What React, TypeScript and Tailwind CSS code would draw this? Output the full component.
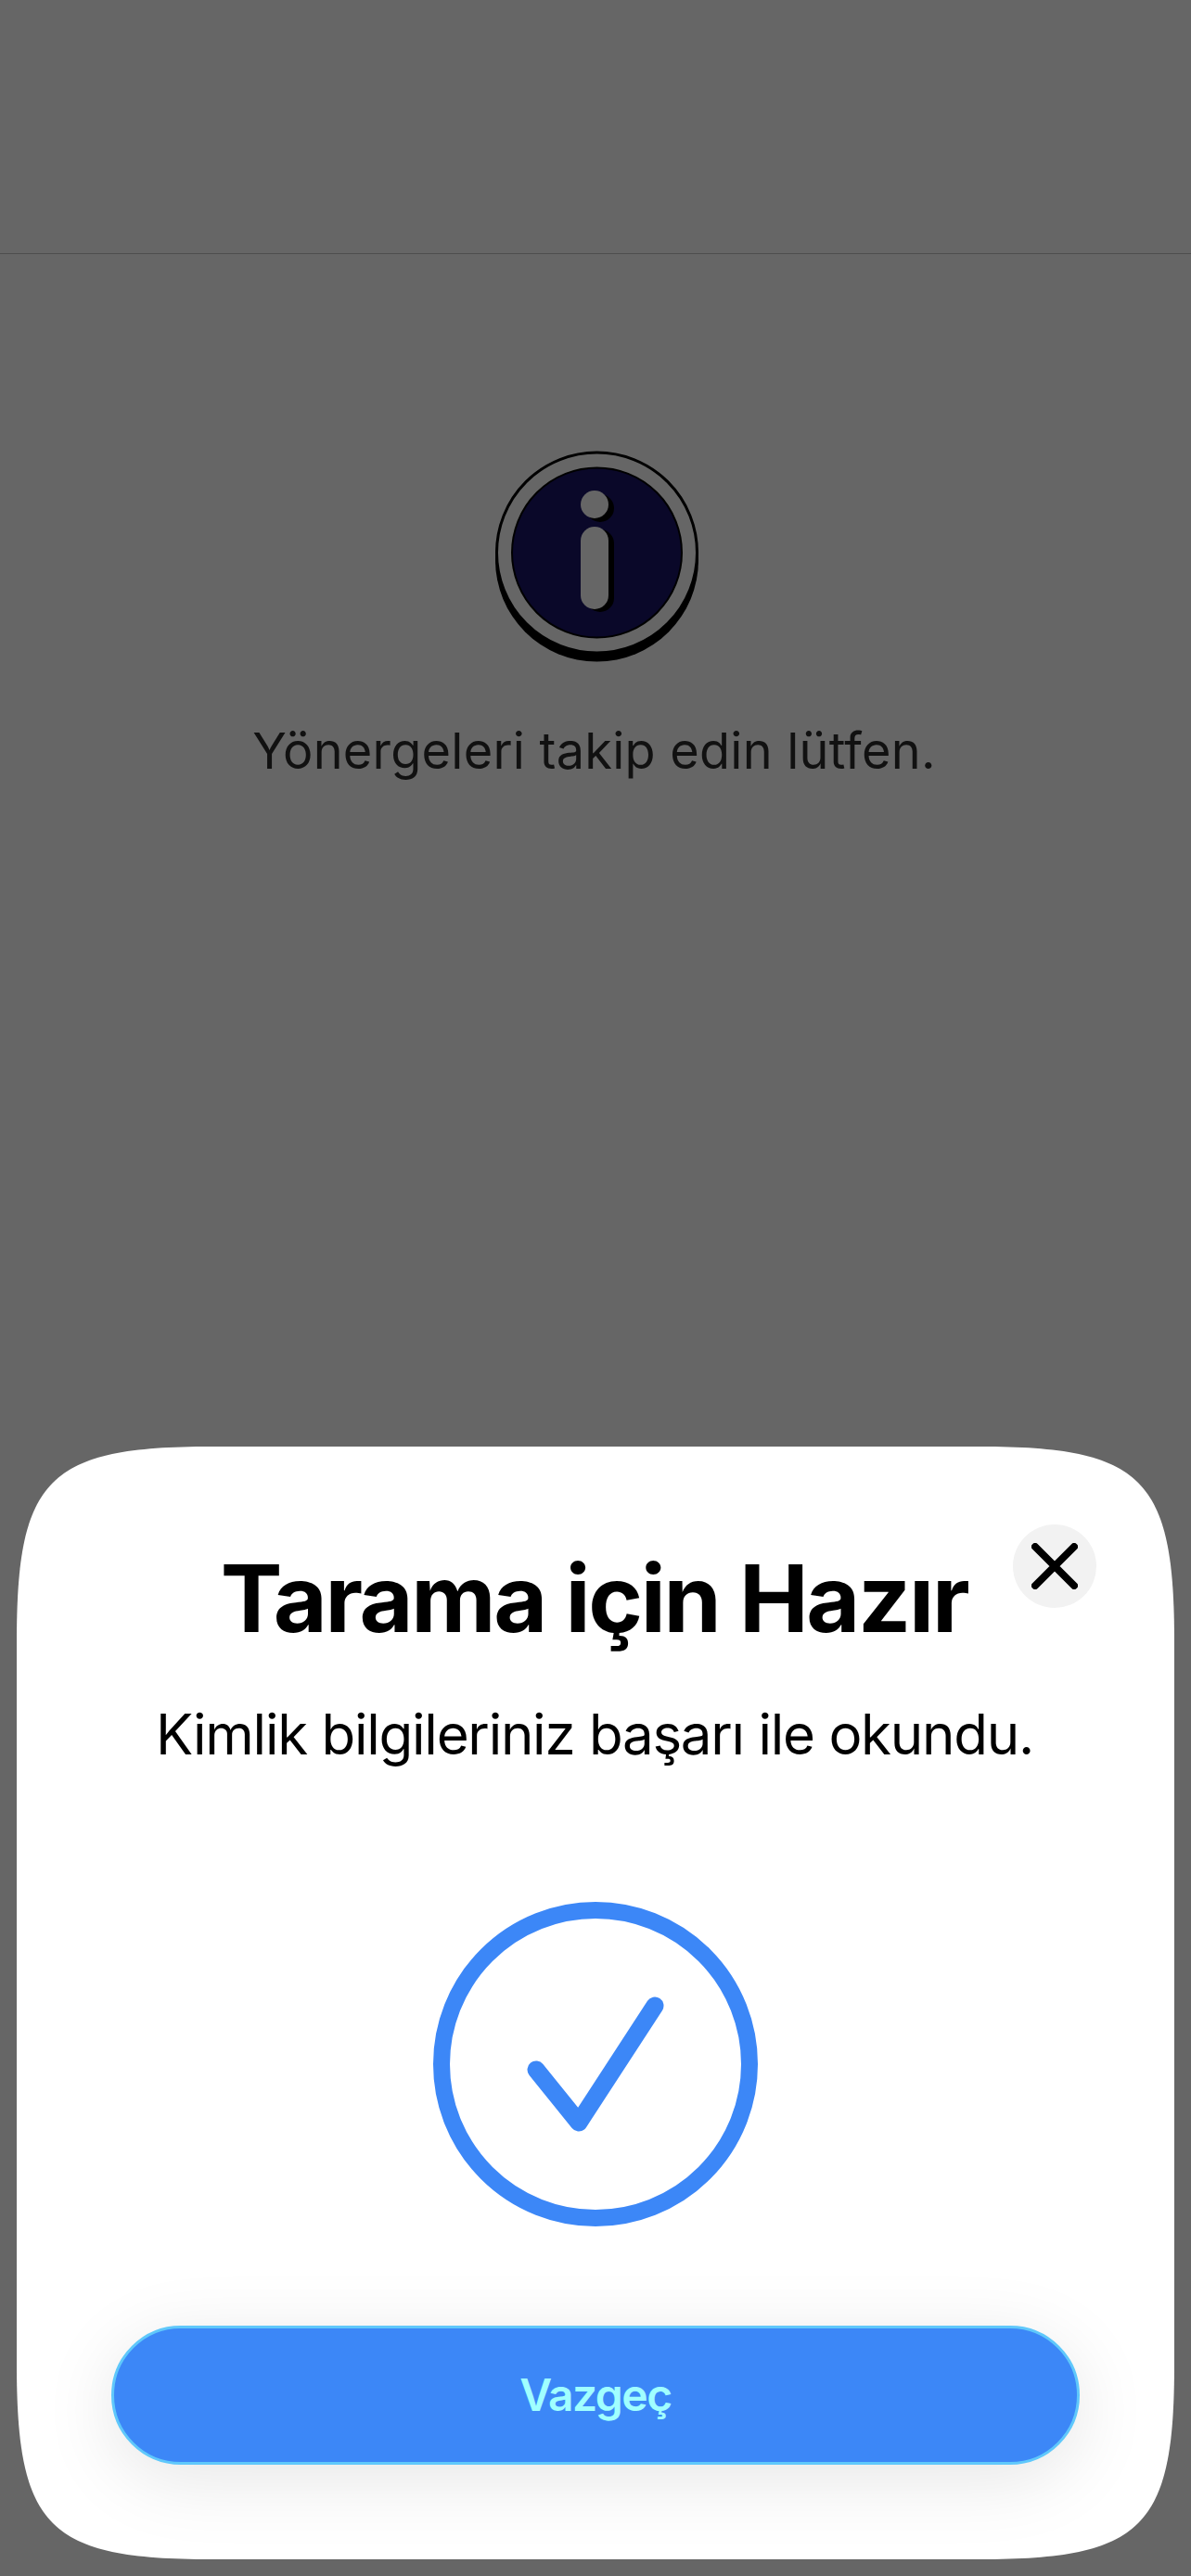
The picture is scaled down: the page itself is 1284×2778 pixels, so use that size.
export default function App() {
  return (
    <div className="relative w-[1284px] h-[2778px] bg-[#666666] overflow-hidden font-['Inter',sans-serif] flex flex-col items-center">
      <div className="w-full h-[274px] shrink-0 border-b border-b-[#4d4d4d]" />
      <svg className="mt-[211px] ml-[4px] shrink-0" width="224" height="232" viewBox="0 0 224 232">
        <circle cx="111.5" cy="119" r="109.5" fill="#000" />
        <circle cx="111.5" cy="111" r="108" fill="#666" stroke="#000" strokeWidth="3" />
        <circle cx="111.5" cy="111" r="91.5" fill="#0a0829" stroke="#000" strokeWidth="2" />
        <circle cx="115" cy="63" r="15" fill="#000" />
        <rect x="100" y="86" width="30" height="89" rx="15" fill="#000" />
        <circle cx="109" cy="59" r="15" fill="#666" />
        <rect x="94" y="83" width="30" height="89" rx="15" fill="#666" />
      </svg>
      <p className="mt-[59px] text-[54px] leading-[68px] text-[#111111] tracking-[0.25px] whitespace-nowrap ml-[-3px]">Yönergeleri takip edin lütfen.</p>
      <div className="absolute left-[18px] top-[1560px] w-[1248px] h-[1200px] bg-white [clip-path:path('M0_210C0_34_34_0_210_0L1038_0C1214_0_1248_34_1248_210L1248_990C1248_1166_1214_1200_1038_1200L210_1200C34_1200_0_1166_0_990Z')] flex flex-col items-center">
        <button className="absolute left-[1074px] top-[84px] w-[90px] h-[90px] rounded-full bg-[#f2f2f2] flex items-center justify-center">
          <svg width="50" height="50" viewBox="0 0 50 50" fill="none" stroke="#000" strokeWidth="8" strokeLinecap="round">
            <path d="M4 4 L46 46 M46 4 L4 46" />
          </svg>
        </button>
        <h1 className="mt-[104px] ml-[-3px] text-[100px] leading-[120px] font-bold tracking-[-2.3px] text-black whitespace-nowrap">Tarama için Hazır</h1>
        <p className="mt-[50px] ml-[-2px] text-[60px] leading-[72px] tracking-[-1.25px] text-black whitespace-nowrap">Kimlik bilgileriniz başarı ile okundu.</p>
        <svg className="mt-[145px] shrink-0" width="350" height="350" viewBox="0 0 350 350" fill="none" stroke="#3c87f7">
          <circle cx="175" cy="175" r="166" strokeWidth="18" />
          <path d="M111 181 L157 238 L239 112" strokeWidth="19" strokeLinecap="round" strokeLinejoin="round" />
        </svg>
        <button className="mt-[107px] w-[1044px] h-[150px] rounded-full bg-[#3c87f7] border-[3px] border-[#5fc8fb] shadow-[0_16px_80px_rgba(0,0,0,0.1)] flex items-center justify-center text-[48px] font-semibold tracking-[-1.5px] text-[#a0ffff]">Vazgeç</button>
      </div>
    </div>
  );
}
